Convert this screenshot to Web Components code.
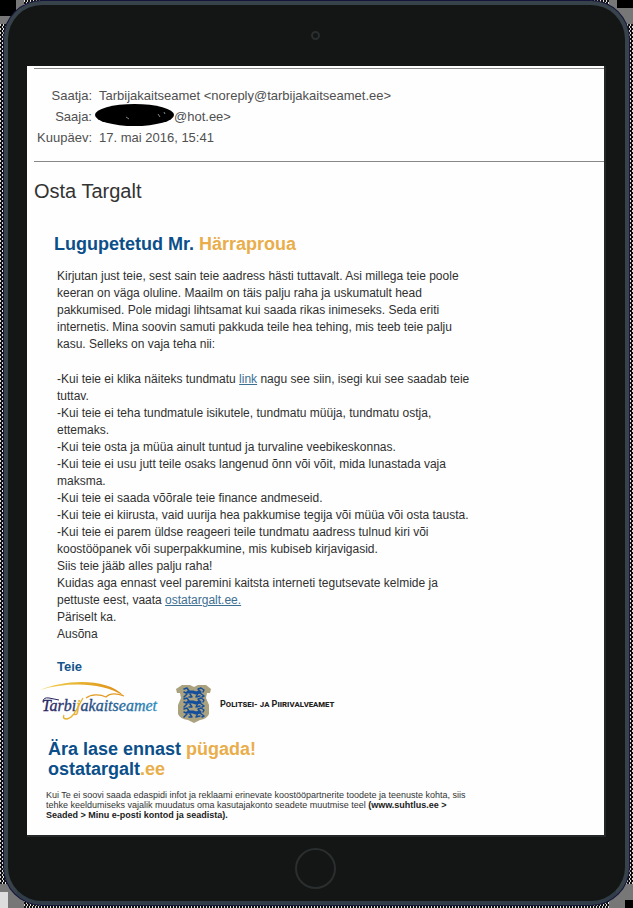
<!DOCTYPE html>
<html lang="et">
<head>
<meta charset="utf-8">
<title>Osta Targalt</title>
<style>
  html { min-height: 100%; background: #fff; }
  body {
    margin: 0;
    min-height: 100vh;
    font-family: "Liberation Sans", Arial, sans-serif;
    color: #333;
    background:
      linear-gradient(#000, #000) 0 0 / 16px 16px no-repeat,
      linear-gradient(#000, #000) 100% 0 / 16px 8px no-repeat,
      linear-gradient(#ddd, #ddd) 0 100% / 8px 16px no-repeat,
      linear-gradient(#000, #000) 100% 100% / 8px 8px no-repeat,
      linear-gradient(#777, #777) 0 0 / 24px 24px no-repeat,
      linear-gradient(#777, #777) 100% 0 / 24px 24px no-repeat,
      linear-gradient(#777, #777) 0 100% / 24px 24px no-repeat,
      linear-gradient(#777, #777) 100% 100% / 24px 24px no-repeat,
      repeating-conic-gradient(#111 0 25%, #ddd 0 50%) 0 0 / 3px 4px;
  }
</style>
</head>
<body>
<tablet-frame>
  <mail-header>
    <mail-field label="Saatja:">Tarbijakaitseamet &lt;noreply@tarbijakaitseamet.ee&gt;</mail-field>
    <mail-field label="Saaja:"><redacted-name></redacted-name>@hot.ee&gt;</mail-field>
    <mail-field label="Kuupäev:">17. mai 2016, 15:41</mail-field>
  </mail-header>
  <mail-subject>Osta Targalt</mail-subject>
  <mail-letter></mail-letter>
  <partner-logos></partner-logos>
  <campaign-footer></campaign-footer>
</tablet-frame>

<script>
const define = (name, html) => {
  const template = document.createElement('template');
  template.innerHTML = html;
  customElements.define(name, class extends HTMLElement {
    constructor() {
      super();
      this.attachShadow({ mode: 'open' }).append(template.content.cloneNode(true));
    }
    connectedCallback() {
      const label = this.shadowRoot.querySelector('[data-label]');
      if (label) label.textContent = this.getAttribute('label');
    }
  });
};

define('tablet-frame', `
  <style>
    :host { display: block; padding: 1px 4px 3px 4px; }
    .case {
      display: flex; flex-direction: column; box-sizing: border-box;
      min-height: calc(100vh - 4px);
      border: 4px solid #38424a; border-bottom-color: #303d49;
      border-radius: 38px; background: #131615; padding: 0 21px 0 19px;
      box-shadow: 0 0 0 1px #15153a;
    }
    .top, .bottom { display: flex; justify-content: center; align-items: center; }
    .top { height: 61px; }
    .bottom { height: 66px; }
    .camera { width: 5px; height: 5px; border: 2px solid #2b2e2e; border-radius: 50%; }
    button { width: 41px; height: 41px; padding: 0; border: 2px solid #2b2e2e; border-radius: 50%; background: none; }
    main { flex: 1; background: #fefefe; box-shadow: 1px 1px 0 1px #242727; padding: 2px 0 12px; }
  </style>
  <div class="case">
    <div class="top"><span class="camera"></span></div>
    <main><slot></slot></main>
    <div class="bottom"><button type="button" aria-label="Home"></button></div>
  </div>`);

define('mail-header', `
  <style>
    :host {
      display: block; margin-left: 7px; padding: 16px 0 13px;
      border-top: 1px solid #888; border-bottom: 1px solid #888;
    }
  </style><slot></slot>`);

define('mail-field', `
  <style>
    :host { display: grid; grid-template-columns: 58px 1fr; column-gap: 7px; font-size: 13px; line-height: 21px; color: #505050; }
    .label { text-align: right; }
    .value { display: flex; align-items: center; }
  </style>
  <span class="label" data-label></span><span class="value"><slot></slot></span>`);

define('redacted-name', `
  <style>
    :host { display: block; width: 79px; height: 21px; margin-left: -4px; }
    svg { display: block; overflow: visible; }
  </style>
  <svg width="79" height="21" viewBox="0 0 79 21" aria-hidden="true">
    <ellipse cx="39.5" cy="9" rx="39.5" ry="11"/>
    <path d="M31 11l3 2M63 8l2 3M69 6l1 2" stroke="#888" stroke-width="1"/>
  </svg>`);

define('mail-subject', `
  <style>
    :host { display: block; margin: 17px 7px 0; }
    h1 { margin: 0; font-size: 20px; line-height: 24px; font-weight: 400; }
  </style><h1><slot></slot></h1>`);

define('mail-letter', `
  <style>
    :host { display: block; margin: 30px 20px 0 30px; font-size: 12px; line-height: 17px; color: #303030; }
    h2 { margin: 0 0 13px -3px; font-size: 18px; line-height: 22px; color: #0b4f8a; }
    h2 span { color: #e9ae4b; }
    p { margin: 0; }
    p + p { margin-top: 18px; }
    a { color: #3d6f92; }
    strong { display: block; margin-top: 15px; font-size: 13px; color: #14558c; }
  </style>
  <h2>Lugupetetud Mr. <span>Härraproua</span></h2>
  <p>Kirjutan just teie, sest sain teie aadress hästi tuttavalt. Asi millega teie poole<br>
  keeran on väga oluline. Maailm on täis palju raha ja uskumatult head<br>
  pakkumised. Pole midagi lihtsamat kui saada rikas inimeseks. Seda eriti<br>
  internetis. Mina soovin samuti pakkuda teile hea tehing, mis teeb teie palju<br>
  kasu. Selleks on vaja teha nii:</p>
  <p>-Kui teie ei klika näiteks tundmatu <a href="#link">link</a> nagu see siin, isegi kui see saadab teie<br>
  tuttav.<br>
  -Kui teie ei teha tundmatule isikutele, tundmatu müüja, tundmatu ostja,<br>
  ettemaks.<br>
  -Kui teie osta ja müüa ainult tuntud ja turvaline veebikeskonnas.<br>
  -Kui teie ei usu jutt teile osaks langenud õnn või võit, mida lunastada vaja<br>
  maksma.<br>
  -Kui teie ei saada võõrale teie finance andmeseid.<br>
  -Kui teie ei kiirusta, vaid uurija hea pakkumise tegija või müüa või osta tausta.<br>
  -Kui teie ei parem üldse reageeri teile tundmatu aadress tulnud kiri või<br>
  koostööpanek või superpakkumine, mis kubiseb kirjavigasid.<br>
  Siis teie jääb alles palju raha!<br>
  Kuidas aga ennast veel paremini kaitsta interneti tegutsevate kelmide ja<br>
  pettuste eest, vaata <a href="#ostatargalt">ostatargalt.ee.</a><br>
  Päriselt ka.<br>
  Ausõna</p>
  <strong>Teie</strong>`);

define('partner-logos', `
  <style>
    :host { display: flex; gap: 18px; align-items: center; margin: 6px 0 0 13px; }
    svg { display: block; flex: none; }
    .police { display: flex; align-items: center; gap: 8px; }
    .police span { font: small-caps 700 9px/14px Roboto, sans-serif; color: #222; white-space: nowrap; }
  </style>
  <svg width="118" height="46" viewBox="0 0 118 46" role="img" aria-label="Tarbijakaitseamet">
    <defs>
      <linearGradient id="ink"><stop offset="0" stop-color="#29245f"/><stop offset=".5" stop-color="#245387"/><stop offset="1" stop-color="#2d8bc0"/></linearGradient>
      <linearGradient id="sun"><stop offset="0" stop-color="#f4d35a"/><stop offset=".5" stop-color="#e6b02d"/><stop offset="1" stop-color="#de8d18"/></linearGradient>
    </defs>
    <path d="M0 9C24-1 66-4 84 15C62 1 27 1 0 9Z" fill="url(#sun)"/>
    <path d="M46 17C51 13 60 13 66 16C70 12 76 12 84 15" fill="none" stroke="#e29b24" stroke-width="1.2"/>
    <text x="2" y="30" font-family="Liberation Serif, serif" font-style="italic" font-size="16" fill="url(#ink)" stroke="url(#ink)" stroke-width=".3">Tarbi<tspan fill="#e6b02d" stroke="#e6b02d">j</tspan>akaitseamet</text>
    <path d="M3 21Q3 16 9 17L19 19" fill="none" stroke="#29245f"/>
    <path d="M43 17C38 25 34 37 27 38Q22 38 24 34" fill="none" stroke="#e6b02d" stroke-width="1.3"/>
  </svg>
  <div class="police">
    <svg width="36" height="40" viewBox="0 0 36 40" role="img" aria-label="Vapp">
      <path d="M6 1H14L18 3L22 1H30L35 5L34 9H31L30 14L33 21V30Q31 35 24 36L18 39L12 36Q4 35 2 30V21L5 14L4 9H1L0 5Z" fill="#aaa17f"/>
      <g fill="none" stroke="#154f9c" stroke-width="1.5" stroke-linecap="round" stroke-linejoin="round">
        <g id="lion">
          <path d="M8 5L11 4L13 7L10 9L8 8M11 10L8 13M14 10L16 13H13M22 9L20 13L24 12M24 9L28 12L26 13M24 8L22 5L25 4L28 6L27 8"/>
          <path d="M12 8L17 8L20 9L24 8" stroke-width="3"/>
        </g>
        <use href="#lion" y="10"/><use href="#lion" y="20"/>
      </g>
    </svg>
    <span>Politsei- ja Piirivalveamet</span>
  </div>`);

define('campaign-footer', `
  <style>
    :host { display: block; margin: 12px 20px 0 19px; }
    h2 { margin: 0 0 11px 2px; font-size: 18px; line-height: 20px; color: #0b4f8a; }
    h2 span { color: #e9ae4b; }
    p { margin: 0; font-size: 9px; line-height: 10px; color: #333; }
    b { color: #222; }
  </style>
  <h2>Ära lase ennast <span>pügada!</span><br>ostatargalt<span>.ee</span></h2>
  <p>Kui Te ei soovi saada edaspidi infot ja reklaami erinevate koostööpartnerite toodete ja teenuste kohta, siis<br>
  tehke keeldumiseks vajalik muudatus oma kasutajakonto seadete muutmise teel <b>(www.suhtlus.ee &gt;<br>
  Seaded &gt; Minu e-posti kontod ja seadista).</b></p>`);
</script>
</body>
</html>
